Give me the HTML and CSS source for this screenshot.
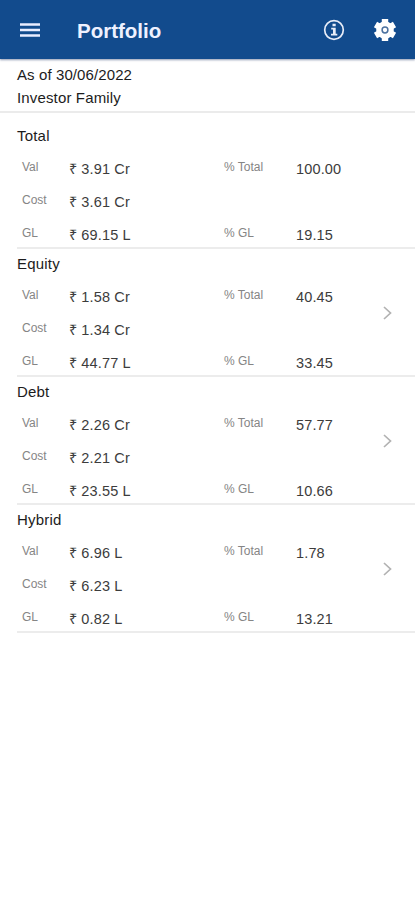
FILE: index.html
```html
<!DOCTYPE html>
<html lang="en">
<head>
  <meta charset="UTF-8" />
  <meta name="viewport" content="width=device-width, initial-scale=1" />
  <title>Portfolio</title>
  <link rel="stylesheet" href="styles.css">
</head>
<body>

<header class="topbar">
  <svg class="menu" viewBox="0 0 20 14"><path d="M0 1.5h20M0 7h20M0 12.5h20" stroke="#e9edff" stroke-width="2.6"/></svg>
  <h1>Portfolio</h1>
  <svg class="info" viewBox="0 0 22 22">
    <circle cx="11" cy="11" r="9.3" fill="none" stroke="#e8edf8" stroke-width="1.7"/>
    <path d="M9.5 4.7h3.2v2.5H9.5zM8.2 8.8h4.5v5.9h1.6v1.7H8v-1.7h2v-4.2H8.2z" fill="#e8edf8"/>
  </svg>
  <svg class="gear" viewBox="0 0 24 24">
    <circle cx="12" cy="12" r="8.8" fill="#fff"/>
    <path d="M12 1v22M2.500 6.500l19 11M2.500 17.500l19-11" stroke="#fff" stroke-width="6.400"/>
    <circle cx="12" cy="12" r="2.900" fill="#fff" stroke="#4c719f" stroke-width="1.500"/>
  </svg>
</header>

<div class="summary">
  <div class="date">As of 30/06/2022</div>
  <div class="investor">Investor Family</div>
</div>

<main class="holdings">
  <section class="asset">
    <h2>Total</h2>
    <div class="figures">
      <span class="label">Val</span><span class="value">₹ 3.91 Cr</span><span class="label">% Total</span><span class="value">100.00</span>
      <span class="label">Cost</span><span class="value wide">₹ 3.61 Cr</span>
      <span class="label">GL</span><span class="value">₹ 69.15 L</span><span class="label">% GL</span><span class="value">19.15</span>
    </div>
  </section>

  <section class="asset">
    <h2>Equity</h2>
    <div class="figures">
      <span class="label">Val</span><span class="value">₹ 1.58 Cr</span><span class="label">% Total</span><span class="value">40.45</span>
      <span class="label">Cost</span><span class="value wide">₹ 1.34 Cr</span>
      <span class="label">GL</span><span class="value">₹ 44.77 L</span><span class="label">% GL</span><span class="value">33.45</span>
    </div>
    <svg class="chevron" viewBox="0 0 9 14"><path d="M1 1l6.500 6L1 13"/></svg>
  </section>

  <section class="asset">
    <h2>Debt</h2>
    <div class="figures">
      <span class="label">Val</span><span class="value">₹ 2.26 Cr</span><span class="label">% Total</span><span class="value">57.77</span>
      <span class="label">Cost</span><span class="value wide">₹ 2.21 Cr</span>
      <span class="label">GL</span><span class="value">₹ 23.55 L</span><span class="label">% GL</span><span class="value">10.66</span>
    </div>
    <svg class="chevron" viewBox="0 0 9 14"><path d="M1 1l6.500 6L1 13"/></svg>
  </section>

  <section class="asset">
    <h2>Hybrid</h2>
    <div class="figures">
      <span class="label">Val</span><span class="value">₹ 6.96 L</span><span class="label">% Total</span><span class="value">1.78</span>
      <span class="label">Cost</span><span class="value wide">₹ 6.23 L</span>
      <span class="label">GL</span><span class="value">₹ 0.82 L</span><span class="label">% GL</span><span class="value">13.21</span>
    </div>
    <svg class="chevron" viewBox="0 0 9 14"><path d="M1 1l6.500 6L1 13"/></svg>
  </section>
</main>

</body>
</html>
```
FILE: styles.css
```css
* {
  box-sizing: border-box;
}
body {
  margin: 0;
  background: #fff;
  color: #1c1c1c;
  font-family: "Liberation Sans", Arial, sans-serif;
}
.topbar {
  display: flex;
  align-items: center;
  height: 59px;
  padding: 0 17px 0 20px;
  background: #124b8d;
  box-shadow: 0 1px 2px rgba(30, 50, 100, 0.5);
}
.topbar h1 {
  flex: 1;
  margin: 3px 0 0 37px;
  font-size: 20.5px;
  line-height: 24px;
  color: #eef1ff;
}
.menu {
  width: 20px;
  height: 14px;
  margin-top: 1px;
}
.info {
  width: 22px;
  height: 22px;
  margin-right: 28px;
}
.gear {
  width: 24px;
  height: 24px;
  margin-right: 1px;
}
.summary {
  height: 54px;
  padding: 4px 17px 0;
  border-bottom: 2px solid #ebebeb;
  font-size: 15px;
  line-height: 24px;
}
.date {
  letter-spacing: 0.1px;
}
.investor {
  margin-top: -1px;
  letter-spacing: 0.15px;
}
.holdings {
  padding: 8px 0 0 17px;
}
.asset {
  position: relative;
  height: 128px;
  border-bottom: 2px solid #ececec;
}
.asset h2 {
  margin: 0;
  padding-top: 5px;
  font-size: 15px;
  font-weight: 400;
  line-height: 20px;
  letter-spacing: 0.2px;
}
.figures {
  display: grid;
  grid-template-columns: 47px 155px 72px 1fr;
  grid-auto-rows: 20px;
  row-gap: 13px;
  padding: 13px 0 0 5px;
}
.label {
  font-size: 12px;
  line-height: 17px;
  color: #858585;
}
.value {
  font-size: 14.5px;
  line-height: 20px;
  letter-spacing: 0.15px;
  color: #3c3c3c;
}
.wide {
  grid-column: span 3;
}
/* sits over the right edge of the row */
.chevron {
  position: absolute;
  top: 57px;
  right: 23px;
  width: 9px;
  height: 14px;
  fill: none;
  stroke: #b2b2b2;
  stroke-width: 1.7;
}
```
